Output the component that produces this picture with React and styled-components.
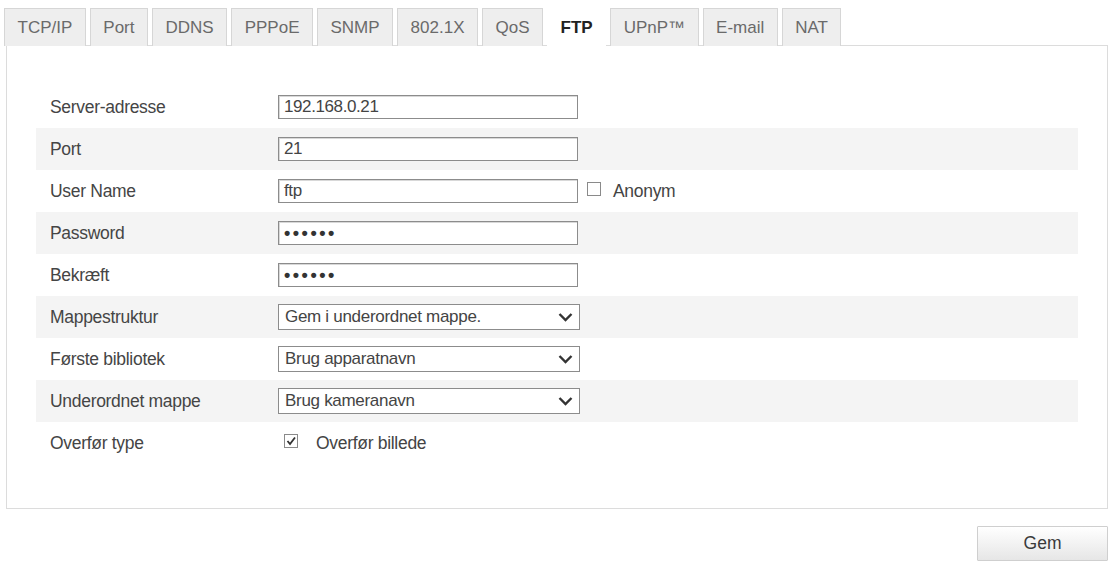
import React from "react"
import styled, { createGlobalStyle } from "styled-components"

const GlobalStyle = createGlobalStyle`
    html, body {
        margin: 0;
        padding: 0;
        background: #fff;
    }
    body {
        font-family: "Liberation Sans", Arial, sans-serif;
        color: #3c3c3c;
    }
`

const tabs = ["TCP/IP", "Port", "DDNS", "PPPoE", "SNMP", "802.1X", "QoS", "FTP", "UPnP™", "E-mail", "NAT"]

const Chevron = () => (
    <svg width="15" height="10" viewBox="0 0 15 10">
        <polyline
            points="1.5,2 7.5,8 13.5,2"
            fill="none"
            stroke="#333"
            strokeWidth="2.4"
            strokeLinejoin="miter"
        />
    </svg>
)

const Tick = () => (
    <svg width="12" height="12" viewBox="0 0 12 12">
        <polyline
            points="2.5,6 5,9 10,2.5"
            fill="none"
            stroke="#333"
            strokeWidth="1.8"
        />
    </svg>
)

const TextField = ({ value, secret }) => (
    <Input>
        {secret ? <Dots>{value}</Dots> : value}
    </Input>
)

const SelectField = ({ value }) => (
    <Select>
        <span>{value}</span>
        <Chevron />
    </Select>
)

const CheckField = ({ checked, label, wide }) => (
    <CheckLabel $wide={wide}>
        <Box>{checked && <Tick />}</Box>
        {label}
    </CheckLabel>
)

const buildRows = () => [
    { label: "Server-adresse", field: <TextField value="192.168.0.21" /> },
    { label: "Port", field: <TextField value="21" /> },
    {
        label: "User Name",
        field: (
            <>
                <TextField value="ftp" />
                <Extra>
                    <CheckField label="Anonym" />
                </Extra>
            </>
        ),
    },
    { label: "Password", field: <TextField secret value="••••••" /> },
    { label: "Bekræft", field: <TextField secret value="••••••" /> },
    { label: "Mappestruktur", field: <SelectField value="Gem i underordnet mappe." /> },
    { label: "Første bibliotek", field: <SelectField value="Brug apparatnavn" /> },
    { label: "Underordnet mappe", field: <SelectField value="Brug kameranavn" /> },
    {
        label: "Overfør type",
        field: (
            <Indent>
                <CheckField checked wide label="Overfør billede" />
            </Indent>
        ),
    },
]

const App = () => {
    const rows = buildRows()
    return (
        <>
            <GlobalStyle />
            <Page>
                <TabBar>
                    {tabs.map((t) => (
                        <Tab key={t} $active={t === "FTP"}>
                            {t}
                        </Tab>
                    ))}
                </TabBar>
                <Panel>
                    {rows.map((r, i) => (
                        <Row key={r.label} $shaded={i % 2 === 1}>
                            <Label>{r.label}</Label>
                            <Field>{r.field}</Field>
                        </Row>
                    ))}
                </Panel>
                <Actions>
                    <Button>Gem</Button>
                </Actions>
            </Page>
        </>
    )
}

export default App

const Page = styled.div`
    width: 1112px;
    box-sizing: border-box;
    padding: 8px 4px 0 4px;
`

const TabBar = styled.div`
    display: flex;
    gap: 4px;
    height: 38px;
    position: relative;
    z-index: 1;
`

const Tab = styled.div`
    box-sizing: border-box;
    height: ${(p) => (p.$active ? "39px" : "38px")};
    padding: 0 12.5px;
    display: flex;
    align-items: center;
    font-size: 17px;
    font-weight: ${(p) => (p.$active ? "bold" : "normal")};
    color: ${(p) => (p.$active ? "#222" : "#6a6a6a")};
    background: ${(p) => (p.$active ? "#fff" : "#eeeeee")};
    border: 1px solid ${(p) => (p.$active ? "#fff" : "#d6d6d6")};
    border-bottom: none;
`

const Panel = styled.div`
    margin: -1px 0 0 2px;
    box-sizing: border-box;
    width: 1102px;
    height: 464px;
    border: 1px solid #dcdcdc;
    padding: 40px 29px 0 29px;
`

const Row = styled.div`
    display: flex;
    align-items: center;
    height: 42px;
    background: ${(p) => (p.$shaded ? "#f4f4f4" : "transparent")};
`

const Label = styled.div`
    width: 228px;
    padding-left: 14px;
    font-size: 17.5px;
    color: #454545;
    letter-spacing: -0.3px;
`

const Field = styled.div`
    display: flex;
    align-items: center;
`

const Input = styled.div`
    box-sizing: border-box;
    width: 300px;
    height: 24px;
    padding: 0 5px;
    display: flex;
    align-items: center;
    border: 1px solid #8c8c8c;
    box-shadow: inset 1px 1px 0 #d8d8d8;
    background: #fff;
    font-size: 17px;
    color: #444;
    letter-spacing: -0.4px;
`

const Dots = styled.span`
    font-size: 18px;
    font-weight: bold;
    color: #333;
    letter-spacing: 2.5px;
`

const Select = styled.div`
    box-sizing: border-box;
    width: 302px;
    height: 26px;
    padding: 0 6px 0 6px;
    display: flex;
    align-items: center;
    justify-content: space-between;
    border: 1px solid #8c8c8c;
    background: #fff;
    font-size: 17px;
    color: #444;
    letter-spacing: -0.3px;
`

const Extra = styled.div`
    margin-left: 9px;
`

const Indent = styled.div`
    padding-left: 6px;
`

const CheckLabel = styled.label`
    display: flex;
    align-items: center;
    gap: ${(p) => (p.$wide ? "18px" : "12px")};
    font-size: 17.5px;
    color: #444;
    letter-spacing: -0.3px;
`

const Box = styled.span`
    box-sizing: border-box;
    width: 14px;
    height: 14px;
    border: 1px solid #8a8a8a;
    background: #fff;
    display: flex;
    align-items: center;
    justify-content: center;
    margin-top: -4px;
`

const Actions = styled.div`
    display: flex;
    justify-content: flex-end;
    margin-top: 17px;
`

const Button = styled.button`
    width: 131px;
    height: 35px;
    border: 1px solid #cfcfcf;
    border-radius: 1px;
    background: linear-gradient(#ffffff, #e6e6e6);
    font-family: "Liberation Sans", Arial, sans-serif;
    font-size: 17.5px;
    color: #3a3a3a;
`
